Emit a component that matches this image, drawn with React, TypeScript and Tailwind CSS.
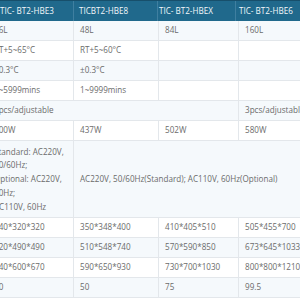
const cell = "pl-[6px] flex items-center border-r border-[#e3e7eb] whitespace-nowrap";

type Row = { cells: string[]; bg: string };

const simpleRows: Row[] = [
  { cells: ["36L", "48L", "84L", "160L"], bg: "bg-[#f5f9fc]" },
  { cells: ["RT+5~65°C", "RT+5~60°C", "", ""], bg: "bg-white" },
  { cells: ["±0.3°C", "±0.3°C", "", ""], bg: "bg-[#f5f9fc]" },
  { cells: ["1~5999mins", "1~9999mins", "", ""], bg: "bg-white" },
];

const lowerRows: Row[] = [
  { cells: ["240*320*320", "350*348*400", "410*405*510", "505*455*700"], bg: "bg-white" },
  { cells: ["420*490*490", "510*548*740", "570*590*850", "673*645*1033"], bg: "bg-[#f5f9fc]" },
  { cells: ["540*600*670", "590*650*930", "730*700*1030", "800*800*1210"], bg: "bg-white" },
  { cells: ["30", "50", "75", "99.5"], bg: "bg-[#f5f9fc]" },
];

function BodyRow({ row }: { row: Row }) {
  return (
    <div className={`grid grid-cols-[86px_85px_80px_1fr] h-[20px] border-b border-[#e3e7eb] ${row.bg}`}>
      {row.cells.map((c, i) => (
        <div key={i} className={cell}>
          {c}
        </div>
      ))}
    </div>
  );
}

export default function App() {
  return (
    <div className="w-[300px] h-[300px] overflow-hidden bg-white font-['Open_Sans',sans-serif] text-[8.1px] text-[#6b6b6b]">
      <div className="w-[420px] -ml-[12px]">
        <div className="flex h-[21px] bg-[#20698c] text-[#f2f7fa] border-t border-[#174f6b]">
          <div className="w-[86px] pl-[12px] flex items-center border-r border-[#3f7fa0] whitespace-nowrap">TIC- BT2-HBE3</div>
          <div className="w-[84px] pl-[5px] flex items-center border-r border-[#3f7fa0] whitespace-nowrap">TICBT2-HBE8</div>
          <div className="w-[78px] pl-[1px] flex items-center border-r border-[#3f7fa0] whitespace-nowrap">TIC- BT2-HBEX</div>
          <div className="flex-1 pl-[3px] flex items-center whitespace-nowrap">TIC- BT2-HBE6</div>
        </div>

        {simpleRows.map((r, i) => (
          <BodyRow key={i} row={r} />
        ))}

        <div className="grid grid-cols-[86px_85px_80px_1fr] h-[20px] border-b border-[#e3e7eb] bg-[#f5f9fc]">
          <div className={`${cell} col-span-3`}>3pcs/adjustable</div>
          <div className={cell}>3pcs/adjustable</div>
        </div>

        <BodyRow row={{ cells: ["300W", "437W", "502W", "580W"], bg: "bg-white" }} />

        <div className="grid grid-cols-[86px_85px_80px_1fr] h-[77px] border-b border-[#e3e7eb] bg-[#f5f9fc]">
          <div className="pl-[6px] flex items-center border-r border-[#e3e7eb] leading-[13.75px] whitespace-nowrap">
            <div>
              Standard: AC220V,
              <br />
              50/60Hz;
              <br />
              Optional: AC220V,
              <br />
              60Hz;
              <br />
              AC110V, 60Hz
            </div>
          </div>
          <div className={`${cell} col-span-3`}>AC220V, 50/60Hz(Standard); AC110V, 60Hz(Optional)</div>
        </div>

        {lowerRows.map((r, i) => (
          <BodyRow key={i} row={r} />
        ))}
      </div>
    </div>
  );
}
